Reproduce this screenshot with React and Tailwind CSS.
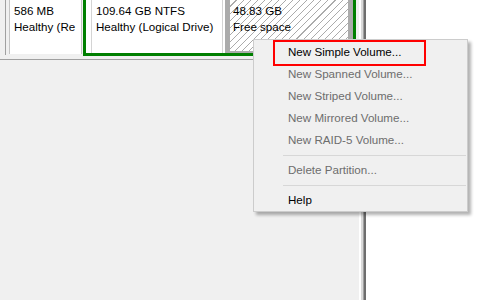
export default function App() {
  const items = [
    { t: "New Simple Volume...", on: true },
    { t: "New Spanned Volume...", on: false },
    { t: "New Striped Volume...", on: false },
    { t: "New Mirrored Volume...", on: false },
    { t: "New RAID-5 Volume...", on: false },
  ];
  return (
    <div className="relative w-[500px] h-[300px] overflow-hidden bg-white text-[11.6px] text-black font-['Liberation_Sans',Arial,sans-serif]">
      <div className="flex h-full">
        <div className="w-[359px] flex flex-col bg-[#f0f0f0]">
          <div className="h-[59px] flex items-start">
            <div className="w-[5px]" />
            <div className="w-px h-[55px] bg-[#a0a0a0]" />
            <div className="w-[3px]" />
            <div className="w-[73px] h-[54px] bg-white border-x border-[#c4c4c4] pl-[4px] pt-[3px] leading-[16px] whitespace-nowrap">
              <div>586 MB</div>
              <div>Healthy (Re</div>
            </div>
            <div className="w-px" />
            <div className="w-[273px] h-[56px] border-[3px] border-t-0 border-[#007f00] flex">
              <div className="w-[139px] h-[53px] bg-white pl-[5px] pr-[2px] flex">
                <div className="flex-1 border-x border-[#d4d4d4] pl-[4px] pt-[3px] leading-[16px] whitespace-nowrap overflow-hidden">
                  <div>109.64 GB NTFS</div>
                  <div>Healthy (Logical Drive)</div>
                </div>
              </div>
              <div className="flex-1 h-[53px] border-[5px] border-t-0 border-b-[2px] border-[#ababab] pl-[3px] pt-[3px] leading-[16px] whitespace-nowrap overflow-hidden bg-[repeating-linear-gradient(135deg,#ffffff_0px,#ffffff_4.2px,#ababab_4.2px,#ababab_5px)]">
                <div>48.83 GB</div>
                <div>Free space</div>
              </div>
            </div>
          </div>
          <div className="h-px bg-[#a0a0a0]" />
          <div className="flex-1 bg-[#f0f0f0]" />
        </div>
        <div className="w-[2px] bg-white" />
        <div className="w-[2px] bg-[#d9d9d9]" />
        <div className="w-px bg-[#a0a0a0]" />
        <div className="w-[2px] bg-[#6e6e6e]" />
        <div className="flex-1 bg-white" />
      </div>

      <div className="absolute left-[253px] top-[39px] w-[215px] h-[173px] border border-[#cccccc] bg-[#f0f0f0] shadow-[3px_3px_3px_rgba(0,0,0,0.3)] pt-px">
        {items.map((it) => (
          <div
            key={it.t}
            className={`h-[22px] flex items-center pl-[34px] whitespace-nowrap ${it.on ? "text-black" : "text-[#6d6d6d]"}`}
          >
            {it.t}
          </div>
        ))}
        <div className="h-[8px] flex items-center pl-[29px] pr-[1px]">
          <div className="flex-1 h-px bg-[#d7d7d7]" />
        </div>
        <div className="h-[22px] flex items-center pl-[34px] text-[#6d6d6d]">Delete Partition...</div>
        <div className="h-[8px] flex items-center pl-[29px] pr-[1px]">
          <div className="flex-1 h-px bg-[#d7d7d7]" />
        </div>
        <div className="h-[22px] flex items-center pl-[34px] text-black">Help</div>
      </div>

      <div className="absolute left-[273px] top-[40px] w-[153px] h-[26px] border-2 border-[#ff0000]" />
    </div>
  );
}
